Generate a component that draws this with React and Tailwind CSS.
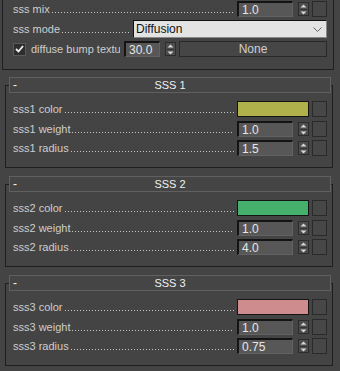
import React from 'react';

function Leader({ label, className = '' }) {
  return (
    <div className={`flex h-4 flex-1 min-w-0 items-center whitespace-nowrap ${className}`}>
      <span className="shrink-0">{label}</span>
      <div className="ml-[2px] mt-[11px] h-px min-w-0 flex-1 self-start bg-[linear-gradient(to_right,#c8c8c8_1px,transparent_1px)] bg-[length:3px_1px] bg-repeat-x" />
    </div>
  );
}

function Spinner() {
  return (
    <div className="flex h-[14px] w-[11px] shrink-0 flex-col items-center justify-center border border-[#2c2c2c] bg-[#4d4d4d]">
      <svg width="7" height="4" viewBox="0 0 7 4" className="mb-[1px]">
        <path d="M0.5 3.5 L3.5 0.5 L6.5 3.5 Z" fill="#d8d8d8" />
      </svg>
      <div className="h-px w-[7px] bg-[#333]" />
      <svg width="7" height="4" viewBox="0 0 7 4" className="mt-[1px]">
        <path d="M0.5 0.5 L3.5 3.5 L6.5 0.5 Z" fill="#d8d8d8" />
      </svg>
    </div>
  );
}

function NumInput({ value, w = 'w-[56px]' }) {
  return (
    <div className={`flex h-4 ${w} shrink-0 items-center border-t-2 border-l-2 border-r border-b border-t-[#141414] border-l-[#141414] border-r-[#626262] border-b-[#626262] bg-[#575757] pl-[3px] text-[12px] leading-[12px] text-[#e6e6e6]`}>
      {value}
    </div>
  );
}

function Square() {
  return <div className="h-4 w-[15px] shrink-0 border border-[#2a2a2a] bg-[#474747]" />;
}

function SpinRow({ label, value, className = '' }) {
  return (
    <div className={`flex h-4 items-center ${className}`}>
      <Leader label={label} className="mr-[3px]" />
      <NumInput value={value} />
      <div className="ml-[5px]">
        <Spinner />
      </div>
      <div className="ml-[3px]">
        <Square />
      </div>
    </div>
  );
}

function ColorRow({ label, color, className = '' }) {
  return (
    <div className={`flex h-4 items-center ${className}`}>
      <Leader label={label} className="mr-[3px]" />
      <div className={`h-4 w-[72px] shrink-0 border border-[#141414] ${color}`} />
      <div className="ml-[3px]">
        <Square />
      </div>
    </div>
  );
}

function Group({ n, color, radius, className = '' }) {
  return (
    <div className={`ml-[5px] h-[83px] w-[328px] border border-[#1f1f1f] pl-[7px] pr-[5px] ${className}`}>
      <div className="relative -mt-[9px] -ml-[4px] mr-[-4px] flex h-4 items-center border border-[#606060] bg-[#454545] text-[#f0f0f0]">
        <span className="absolute left-[3px] top-[0px] text-[12px] leading-[14px]">-</span>
        <span className="flex-1 text-center text-[11px] leading-[14px]">SSS {n}</span>
      </div>
      <ColorRow label={`sss${n} color`} color={color} className="mt-[8px]" />
      <SpinRow label={`sss${n} weight`} value="1.0" className="mt-[4px]" />
      <SpinRow label={`sss${n} radius`} value={radius} className="mt-[3px]" />
    </div>
  );
}

export default function App() {
  return (
    <div className="h-[371px] w-[340px] overflow-hidden bg-[#444444] font-['Liberation_Sans',Arial,sans-serif] text-[11px] leading-[14px] text-[#cdcdcd]">
      {/* top rollout, cut off at the top */}
      <div className="ml-[2px] h-[70px] w-[332px] border-x border-b border-[#1f1f1f] pt-[1px] pl-[10px] pr-[6px]">
        <SpinRow label="sss mix" value="1.0" />
        <div className="mt-[3px] flex h-[18px] items-center">
          <Leader label="sss mode" className="mr-[3px]" />
          <div className="flex h-[18px] w-[194px] shrink-0 items-center border-t border-l border-r border-b border-t-[#111] border-l-[#111] border-r-[#888] border-b-[#888] bg-[#e3e3e3] pl-[2px] pr-[4px] text-[12px] leading-[14px] text-[#111]">
            <span className="flex-1">Diffusion</span>
            <svg width="9" height="5" viewBox="0 0 9 5">
              <path d="M0.5 0.5 L4.5 4.5 L8.5 0.5" fill="none" stroke="#666" strokeWidth="1" />
            </svg>
          </div>
        </div>
        <div className="mt-[3px] flex h-4 items-center">
          <div className="flex h-[13px] w-[13px] shrink-0 items-center justify-center border border-[#5a5a5a] bg-[#2e2e2e]">
            <svg width="9" height="8" viewBox="0 0 9 8">
              <path d="M1 4 L3.5 6.5 L8 1" fill="none" stroke="#f2f2f2" strokeWidth="1.8" />
            </svg>
          </div>
          <div className="ml-[5px] w-[89px] shrink-0 overflow-hidden whitespace-nowrap">diffuse bump textu</div>
          <NumInput value="30.0" w="w-[36px] ml-[4px]" />
          <div className="ml-[5px]">
            <Spinner />
          </div>
          <div className="ml-[3px] flex h-4 flex-1 items-center justify-center border border-[#282828] bg-[#464646] text-[12px] leading-[14px] text-[#cfcfcf]">
            None
          </div>
        </div>
      </div>

      <Group n={1} color="bg-[#b0b14b]" radius="1.5" className="mt-[15px]" />
      <Group n={2} color="bg-[#44b06b]" radius="4.0" className="mt-[16px]" />
      <Group n={3} color="bg-[#cf8c8e]" radius="0.75" className="mt-[16px]" />
    </div>
  );
}
